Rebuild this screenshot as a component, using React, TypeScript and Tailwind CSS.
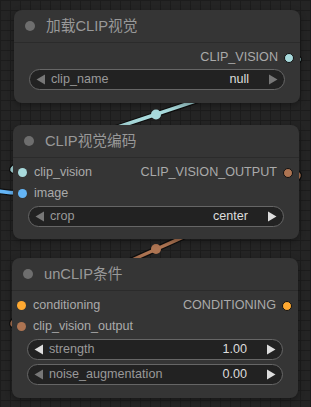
import React from 'react';

const FONT = "font-['Liberation_Sans','Noto_Sans_CJK_SC',sans-serif]";

function Arrow({ dir, dim }: { dir: 'left' | 'right'; dim?: boolean }) {
  return (
    <svg width="10" height="11" viewBox="0 0 10 11" className="shrink-0">
      <polygon
        points={dir === 'left' ? '9,0.5 9,10.5 0.5,5.5' : '1,0.5 1,10.5 9.5,5.5'}
        fill={dim ? '#777' : '#ddd'}
      />
    </svg>
  );
}

function Widget({ label, value, leftDim, rightDim, className = '' }: {
  label: string; value: string; leftDim?: boolean; rightDim?: boolean; className?: string;
}) {
  return (
    <div className={`flex h-[21px] items-center rounded-full border border-[#666] bg-[#222] pl-[6px] pr-[6px] text-[12.6px] ${className}`}>
      <Arrow dir="left" dim={leftDim} />
      <span className="ml-[5px] text-[#999]">{label}</span>
      <span className="ml-auto text-[#ddd]">{value}</span>
      <span className="ml-[19px]"><Arrow dir="right" dim={rightDim} /></span>
    </div>
  );
}

function Slot({ input, output, inColor, outColor }: {
  input?: string; output?: string; inColor?: string; outColor?: string;
}) {
  return (
    <div className="flex h-[21px] items-center text-[12.6px] text-[#aaa]">
      {input ? (
        <>
          <span className="ml-[5px] h-[9px] w-[9px] rounded-full" style={{ background: inColor }} />
          <span className="ml-[7px]">{input}</span>
        </>
      ) : null}
      {output ? (
        <>
          <span className="ml-auto">{output}</span>
          <span className="ml-[6px] mr-[6px] h-[10px] w-[10px] rounded-full border border-[#111]" style={{ background: outColor }} />
        </>
      ) : null}
    </div>
  );
}

function Node({ title, className, children }: { title: string; className: string; children: React.ReactNode }) {
  return (
    <div className={`absolute w-[286px] rounded-[8px] bg-[#353535] shadow-[0_2px_6px_rgba(0,0,0,0.35)] ${className}`}>
      <div className="flex h-[33px] items-center border-b border-[#2b2b2b] pl-[11px]">
        <span className="h-[10px] w-[10px] rounded-full bg-[#6e6e6e]" />
        <span className="ml-[11px] text-[14.7px] text-[#999]">{title}</span>
      </div>
      {children}
    </div>
  );
}

export default function App() {
  return (
    <div className={`relative h-[407px] w-[311px] overflow-hidden bg-[#242424] bg-[linear-gradient(to_right,#1c1c1c_1px,transparent_1px),linear-gradient(to_bottom,#1c1c1c_1px,transparent_1px)] bg-[size:10px_10px] ${FONT}`}>
      {/* links */}
      <svg className="absolute inset-0" width="311" height="407">
        <g fill="none" strokeLinecap="round">
          <path d="M289,57 C369,57 -58,172 22,172" stroke="rgba(0,0,0,0.6)" strokeWidth="6" />
          <path d="M289,57 C369,57 -58,172 22,172" stroke="#a8dadc" strokeWidth="3.5" />
          <path d="M289,172 C369,172 -58,327 22,327" stroke="rgba(0,0,0,0.6)" strokeWidth="6" />
          <path d="M289,172 C369,172 -58,327 22,327" stroke="#ad7452" strokeWidth="3.5" />
          <path d="M-70,168 C-25,172 -30,193 22,193" stroke="rgba(0,0,0,0.6)" strokeWidth="6" />
          <path d="M-70,168 C-25,172 -30,193 22,193" stroke="#64b5f6" strokeWidth="3.5" />
        </g>
        <circle cx="156" cy="114.5" r="5" fill="#a8dadc" />
        <circle cx="156" cy="249" r="5" fill="#ad7452" />
      </svg>

      <Node title="加载CLIP视觉" className="left-[14px] top-[10px]">
        <div className="pt-[4px] pb-[13px]">
          <Slot output="CLIP_VISION" outColor="#a8dadc" />
          <Widget className="mx-[15px] mt-[1px]" label="clip_name" value="null" leftDim rightDim />
        </div>
      </Node>

      <Node title="CLIP视觉编码" className="left-[13px] top-[125px]">
        <div className="pt-[4px] pb-[12px]">
          <Slot input="clip_vision" inColor="#a8dadc" output="CLIP_VISION_OUTPUT" outColor="#ad7452" />
          <Slot input="image" inColor="#64b5f6" />
          <Widget className="mx-[15px] mt-[2px]" label="crop" value="center" leftDim />
        </div>
      </Node>

      <Node title="unCLIP条件" className="left-[12px] top-[258px]">
        <div className="pt-[4px] pb-[13px]">
          <Slot input="conditioning" inColor="#ffa931" output="CONDITIONING" outColor="#ffa931" />
          <Slot input="clip_vision_output" inColor="#ad7452" />
          <Widget className="mx-[15px] mt-[2px]" label="strength" value="1.00" />
          <Widget className="mx-[15px] mt-[4px]" label="noise_augmentation" value="0.00" leftDim />
        </div>
      </Node>
    </div>
  );
}
